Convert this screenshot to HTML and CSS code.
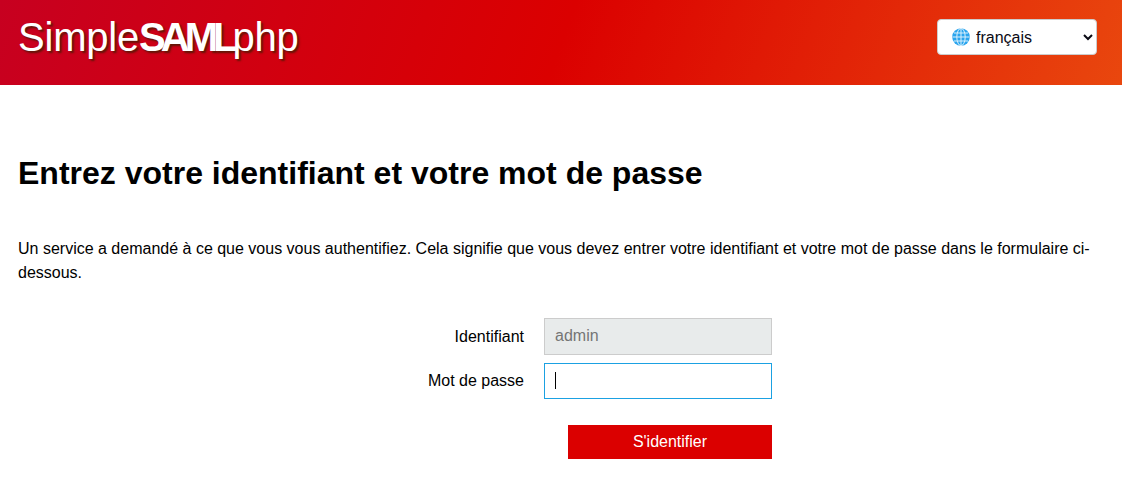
FILE: index.html
```html
<!DOCTYPE html>
<html lang="fr">
<head>
    <meta charset="UTF-8">
    <meta name="viewport" content="width=device-width, initial-scale=1.0">
    <title>Entrez votre identifiant et votre mot de passe</title>
    <link rel="stylesheet" href="styles.css">
</head>
<body>
    <header class="header">
        <a class="logo" href="#">Simple<span class="logo-saml">SAML</span>php</a>
        <div class="language-box">
            <svg class="globe" viewBox="0 0 18 18" aria-hidden="true">
                <circle cx="9" cy="9" r="8.8" fill="#2aa5ee"/>
                <g fill="none" stroke="#d9f0fc" stroke-width="1">
                    <ellipse cx="9" cy="9" rx="4.2" ry="8.6"/>
                    <path d="M9 .5v17M2 5h14M.5 9h17M2 13h14"/>
                </g>
            </svg>
            <select class="language-select" id="language">
                <option>français</option>
                <option>English</option>
            </select>
        </div>
    </header>

    <main class="content">
        <h1>Entrez votre identifiant et votre mot de passe</h1>
        <p class="intro">Un service a demandé à ce que vous vous authentifiez. Cela signifie que vous devez entrer votre identifiant et votre mot de passe dans le formulaire ci-dessous.</p>

        <form class="login-form" onsubmit="return false">
            <label class="field-label" for="username">Identifiant</label>
            <input class="field-input field-disabled" type="text" id="username" value="admin" disabled>

            <label class="field-label" for="password">Mot de passe</label>
            <div class="password-wrap">
                <input class="field-input field-focus" type="password" id="password">
                <span class="caret"></span>
            </div>

            <button class="submit-button" type="submit">S'identifier</button>
        </form>
    </main>
</body>
</html>
```

FILE: styles.css
```css
* {
    box-sizing: border-box;
}
body {
    margin: 0;
    font-family: "Liberation Sans", Arial, sans-serif;
    font-size: 16px;
    color: #000;
    background: #fff;
}
.header {
    height: 85px;
    padding: 0 25px 0 18px;
    display: flex;
    justify-content: space-between;
    align-items: flex-start;
    background: linear-gradient(110deg, #c70020 0%, #db0000 50%, #e9470e 100%);
}
.logo {
    margin-top: 14px;
    font-size: 40px;
    line-height: 46px;
    letter-spacing: -0.2px;
    color: #fff;
    text-decoration: none;
    text-shadow: 2px 2px 2px rgba(60, 30, 0, 0.75);
}
.logo-saml {
    font-weight: bold;
    letter-spacing: -5px;
}
.language-box {
    position: relative;
    margin-top: 19px;
}
.globe {
    position: absolute;
    left: 15px;
    top: 9px;
    width: 18px;
    height: 18px;
    pointer-events: none;
}
.language-select {
    display: block;
    width: 160px;
    height: 36px;
    padding: 0 8px 0 34px;
    font-family: inherit;
    font-size: 16px;
    color: #0a0a14;
    background: #fff;
    border: 1px solid #ccc;
    border-radius: 4px;
}
.content {
    padding: 0 18px;
}
h1 {
    margin: 69px 0 0;
    font-size: 32px;
    line-height: 38px;
    font-weight: bold;
}
.intro {
    margin: 45px 0 0;
    line-height: 24px;
}
.login-form {
    margin: 33px 0 0 388px;
    display: grid;
    grid-template-columns: 118px 228px;
    column-gap: 20px;
    row-gap: 8px;
    align-items: center;
}
.field-label {
    text-align: right;
}
.field-input {
    display: block;
    width: 228px;
    height: 36px;
    padding: 0 10px;
    font-family: inherit;
    font-size: 16px;
    border: 1px solid #ccc;
    outline: none;
    border-radius: 0;
}
.field-disabled {
    height: 37px;
    padding-bottom: 2px;
    color: #757575;
    background: #e8ebeb;
}
.field-focus {
    border-color: #1ba1e2;
}
.password-wrap {
    position: relative;
}
.caret {
    position: absolute;
    left: 11px;
    top: 9px;
    width: 1px;
    height: 17px;
    background: #000;
}
.submit-button {
    grid-column: 2;
    justify-self: end;
    width: 204px;
    height: 34px;
    margin-top: 18px;
    font-family: inherit;
    font-size: 16px;
    color: #fff;
    background: #db0000;
    border: none;
    border-radius: 0;
}
```
